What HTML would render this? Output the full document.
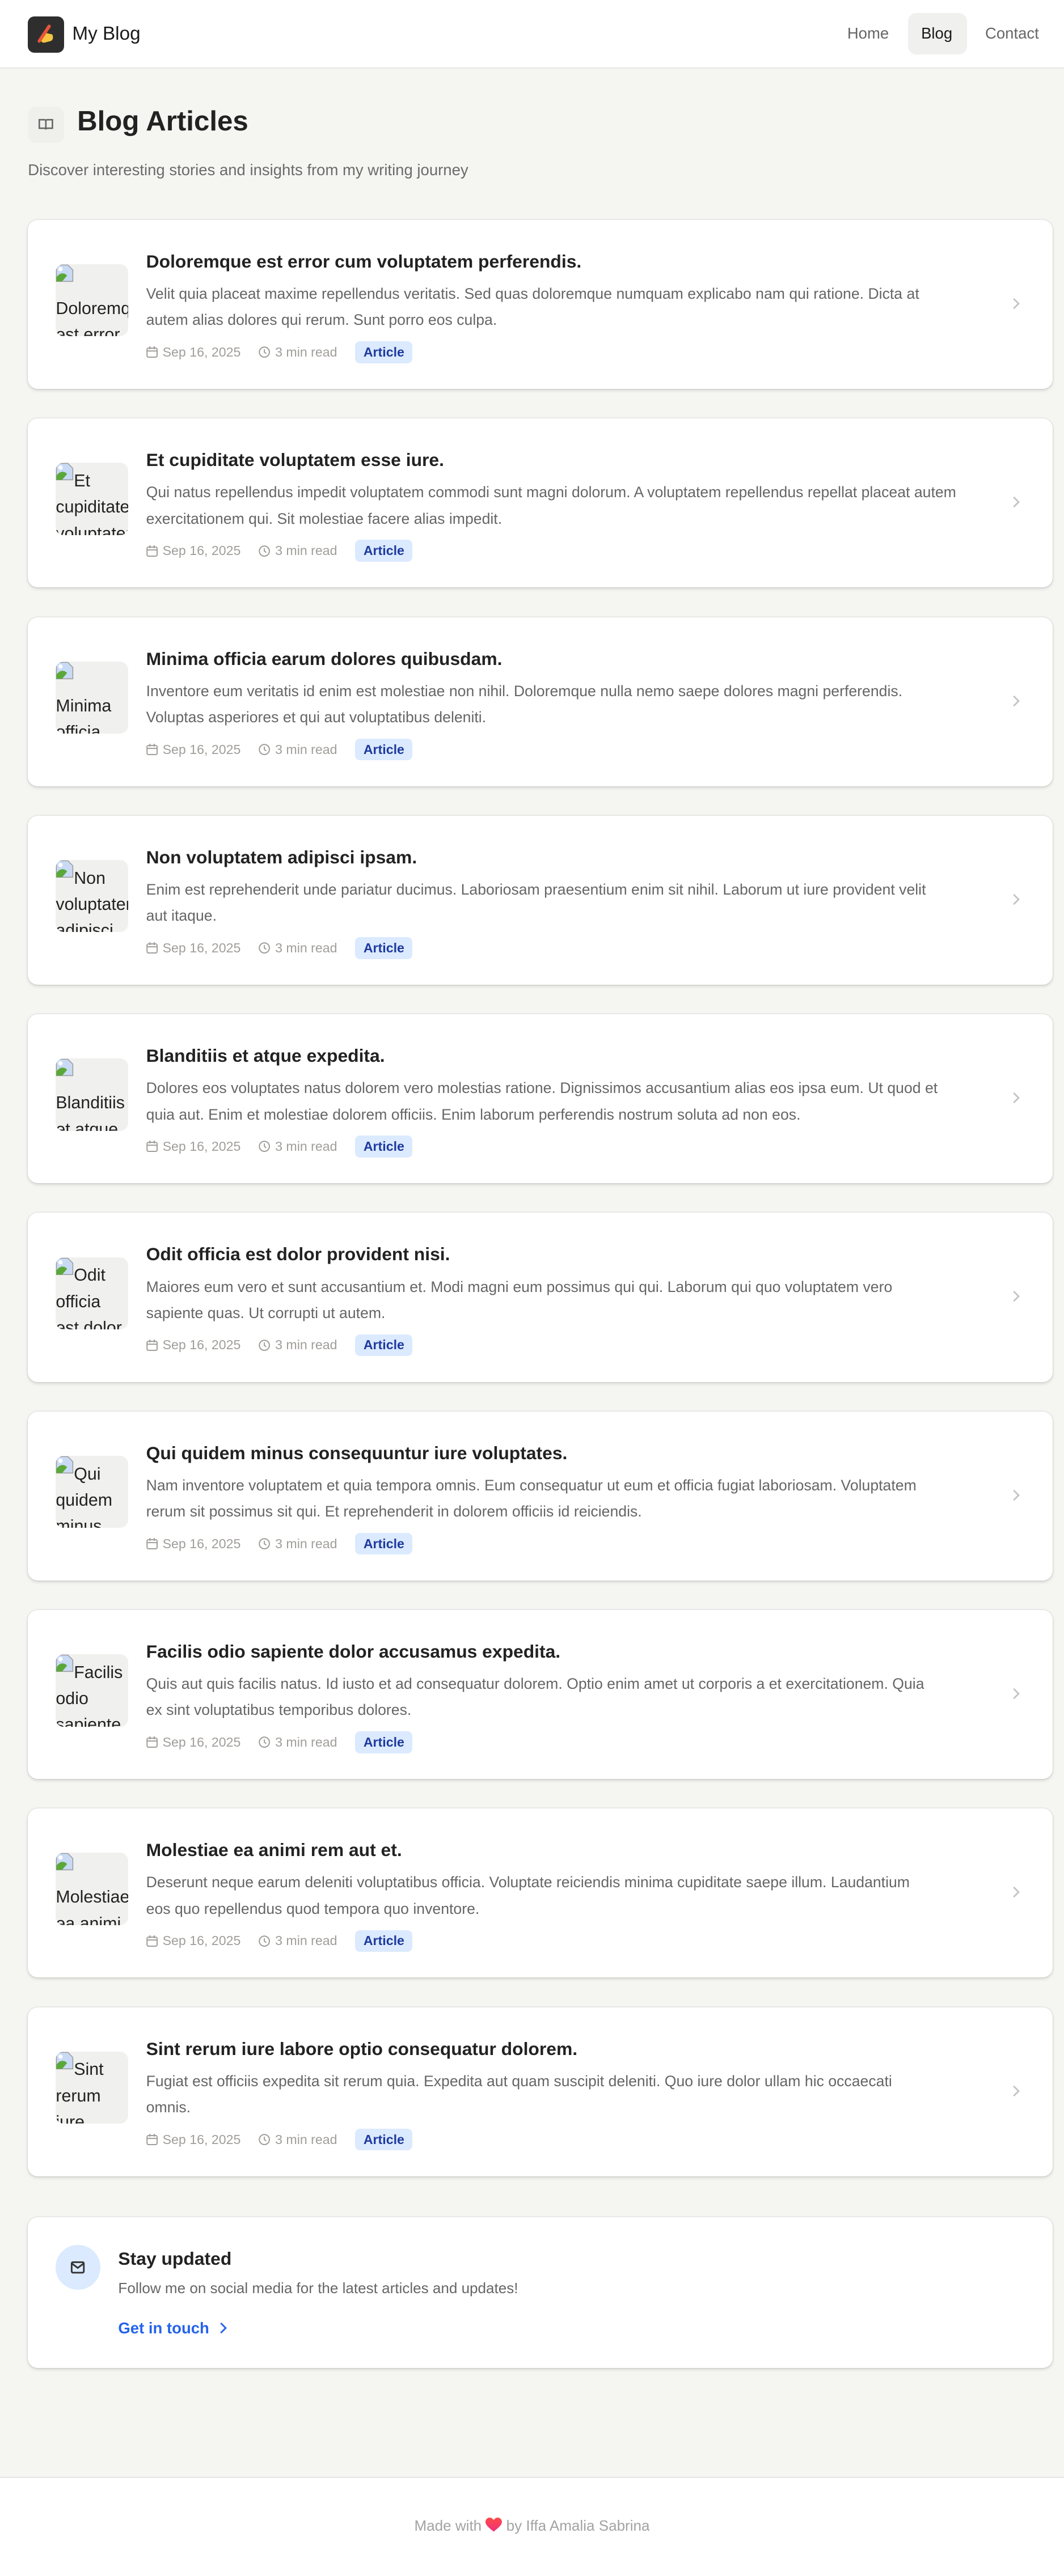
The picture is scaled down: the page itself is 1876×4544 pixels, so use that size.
<!DOCTYPE html>
<html><head><meta charset="utf-8">
<style>
html,body{margin:0;padding:0}
body{width:648px;height:1569px;zoom:2.895;background:#f5f5f2;font-family:"Liberation Sans",sans-serif;position:relative;overflow:hidden;color:#222}
.hdr{position:absolute;left:0;top:0;width:648px;height:41px;background:#fff;border-bottom:1px solid #e6e6e3}
.logo{position:absolute;left:17px;top:10px;width:22px;height:22px;background:#2e2e2e;border-radius:4px}
.brand{position:absolute;left:44px;top:14px;font-size:11.5px;color:#1a1a1a}
.nav{position:absolute;top:15px;font-size:9.5px;color:#666}
.pill{position:absolute;left:553px;top:8px;width:36px;height:25px;background:#f0f0ee;border-radius:5px}
.bookbox{position:absolute;left:17px;top:65px;width:22px;height:22px;background:#efefec;border-radius:5px}
h1{position:absolute;left:47px;top:64px;margin:0;font-size:17px;font-weight:bold;color:#222}
.sub{position:absolute;left:17px;top:98px;font-size:9.5px;color:#6b6b6b}
.card{position:absolute;left:17px;width:624px;height:103px;background:#fff;border-radius:6px;box-shadow:0 1px 2px rgba(0,0,0,.12),0 0 0 .5px rgba(0,0,0,.05)}
.img{position:absolute;left:17px;top:30px;width:44px;height:44px;background:#f0f0ee;border-radius:5px;overflow:hidden;font-size:10.5px;line-height:16px;color:#222;margin-top:-3px;padding-top:3px;box-sizing:content-box;height:41px}
.img svg{vertical-align:top;margin-top:-3px}
.t{position:absolute;left:72px;top:19px;font-size:11px;font-weight:bold;color:#222}
.ex{position:absolute;left:72px;top:37px;width:495px;font-size:9.2px;line-height:16px;color:#666}
.meta{position:absolute;left:72px;top:74px;font-size:8px;color:#a09e9a;display:flex;align-items:center;white-space:nowrap}
.meta svg{margin-right:3px}
.badge{background:#dbeafe;color:#1e3a9e;font-weight:bold;border-radius:3px;padding:2px 5px;margin-left:11px}
.chev{position:absolute;left:598px;top:47px}
.stay{position:absolute;left:17px;top:1351px;width:624px;height:92px;background:#fff;border-radius:6px;box-shadow:0 1px 2px rgba(0,0,0,.12),0 0 0 .5px rgba(0,0,0,.05)}
.foot{position:absolute;left:0;top:1509px;width:648px;height:60px;background:#fff;border-top:1px solid #e6e6e3}
</style></head><body>
<svg width="0" height="0" style="position:absolute"><defs><symbol id="bi" viewBox="0 0 11 11"><path d="M.5.5h7l3 3v7h-10z" fill="#c9daf5" stroke="#999" stroke-width=".5"/><path d="M.5 10.5V8c2-3 5-3 6.5-1L4 10.5z" fill="#5aa83a"/><circle cx="3" cy="3" r="1.3" fill="#fff"/></symbol></defs></svg>
<div class="hdr">
 <div class="logo"><svg width="22" height="22" viewBox="0 0 22 22"><path d="M8 14 Q8 10 11 10 L15 11 Q16 14 14 15 L10 16 Q8 16 8 14Z" fill="#f5c542"/><path d="M7 15 L13 6" stroke="#e8553a" stroke-width="2" stroke-linecap="round"/></svg></div>
 <div class="brand">My Blog</div>
 <div class="nav" style="left:516px">Home</div>
 <div class="pill"></div>
 <div class="nav" style="left:561px;color:#1a1a1a">Blog</div>
 <div class="nav" style="left:600px">Contact</div>
</div>
<div class="bookbox"><svg width="22" height="22" viewBox="0 0 22 22"><path d="M7 8h3.2c.5 0 .8.3.8.8V14c0-.5-.4-.8-.8-.8H7zM15 8h-3.2c-.5 0-.8.3-.8.8V14c0-.5.4-.8.8-.8H15z" fill="none" stroke="#666" stroke-width=".9"/></svg></div>
<h1>Blog Articles</h1>
<div class="sub">Discover interesting stories and insights from my writing journey</div>

<div class="card" style="top:134px"><div class="img"><svg width="11" height="11"><use href="#bi"/></svg>Doloremque est error</div><div class="t">Doloremque est error cum voluptatem perferendis.</div><div class="ex">Velit quia placeat maxime repellendus veritatis. Sed quas doloremque numquam explicabo nam qui ratione. Dicta at autem alias dolores qui rerum. Sunt porro eos culpa.</div><div class="meta"><svg width="7" height="7" viewBox="0 0 8 8"><rect x=".5" y="1.2" width="7" height="6.3" rx="1" fill="none" stroke="#a09e9a" stroke-width=".8"/><path d="M.5 3.2h7M2.5 0v2M5.5 0v2" stroke="#a09e9a" stroke-width=".8"/></svg>Sep 16, 2025<svg style="margin-left:11px" width="7" height="7" viewBox="0 0 8 8"><circle cx="4" cy="4" r="3.5" fill="none" stroke="#a09e9a" stroke-width=".8"/><path d="M4 2v2l1.3 1" fill="none" stroke="#a09e9a" stroke-width=".8"/></svg>3 min read<span class="badge">Article</span></div><svg class="chev" width="8" height="8" viewBox="0 0 8 8"><path d="M2.5 1l3 3-3 3" fill="none" stroke="#c4c4c4" stroke-width="1"/></svg></div>

<div class="card" style="top:255px"><div class="img"><svg width="11" height="11"><use href="#bi"/></svg>Et cupiditate voluptatem</div><div class="t">Et cupiditate voluptatem esse iure.</div><div class="ex">Qui natus repellendus impedit voluptatem commodi sunt magni dolorum. A voluptatem repellendus repellat placeat autem exercitationem qui. Sit molestiae facere alias impedit.</div><div class="meta"><svg width="7" height="7" viewBox="0 0 8 8"><rect x=".5" y="1.2" width="7" height="6.3" rx="1" fill="none" stroke="#a09e9a" stroke-width=".8"/><path d="M.5 3.2h7M2.5 0v2M5.5 0v2" stroke="#a09e9a" stroke-width=".8"/></svg>Sep 16, 2025<svg style="margin-left:11px" width="7" height="7" viewBox="0 0 8 8"><circle cx="4" cy="4" r="3.5" fill="none" stroke="#a09e9a" stroke-width=".8"/><path d="M4 2v2l1.3 1" fill="none" stroke="#a09e9a" stroke-width=".8"/></svg>3 min read<span class="badge">Article</span></div><svg class="chev" width="8" height="8" viewBox="0 0 8 8"><path d="M2.5 1l3 3-3 3" fill="none" stroke="#c4c4c4" stroke-width="1"/></svg></div>

<div class="card" style="top:376px"><div class="img"><svg width="11" height="11"><use href="#bi"/></svg>Minima officia</div><div class="t">Minima officia earum dolores quibusdam.</div><div class="ex">Inventore eum veritatis id enim est molestiae non nihil. Doloremque nulla nemo saepe dolores magni perferendis. Voluptas asperiores et qui aut voluptatibus deleniti.</div><div class="meta"><svg width="7" height="7" viewBox="0 0 8 8"><rect x=".5" y="1.2" width="7" height="6.3" rx="1" fill="none" stroke="#a09e9a" stroke-width=".8"/><path d="M.5 3.2h7M2.5 0v2M5.5 0v2" stroke="#a09e9a" stroke-width=".8"/></svg>Sep 16, 2025<svg style="margin-left:11px" width="7" height="7" viewBox="0 0 8 8"><circle cx="4" cy="4" r="3.5" fill="none" stroke="#a09e9a" stroke-width=".8"/><path d="M4 2v2l1.3 1" fill="none" stroke="#a09e9a" stroke-width=".8"/></svg>3 min read<span class="badge">Article</span></div><svg class="chev" width="8" height="8" viewBox="0 0 8 8"><path d="M2.5 1l3 3-3 3" fill="none" stroke="#c4c4c4" stroke-width="1"/></svg></div>

<div class="card" style="top:497px"><div class="img"><svg width="11" height="11"><use href="#bi"/></svg>Non voluptatem adipisci</div><div class="t">Non voluptatem adipisci ipsam.</div><div class="ex">Enim est reprehenderit unde pariatur ducimus. Laboriosam praesentium enim sit nihil. Laborum ut iure provident velit<br>aut itaque.</div><div class="meta"><svg width="7" height="7" viewBox="0 0 8 8"><rect x=".5" y="1.2" width="7" height="6.3" rx="1" fill="none" stroke="#a09e9a" stroke-width=".8"/><path d="M.5 3.2h7M2.5 0v2M5.5 0v2" stroke="#a09e9a" stroke-width=".8"/></svg>Sep 16, 2025<svg style="margin-left:11px" width="7" height="7" viewBox="0 0 8 8"><circle cx="4" cy="4" r="3.5" fill="none" stroke="#a09e9a" stroke-width=".8"/><path d="M4 2v2l1.3 1" fill="none" stroke="#a09e9a" stroke-width=".8"/></svg>3 min read<span class="badge">Article</span></div><svg class="chev" width="8" height="8" viewBox="0 0 8 8"><path d="M2.5 1l3 3-3 3" fill="none" stroke="#c4c4c4" stroke-width="1"/></svg></div>

<div class="card" style="top:618px"><div class="img"><svg width="11" height="11"><use href="#bi"/></svg>Blanditiis et atque</div><div class="t">Blanditiis et atque expedita.</div><div class="ex">Dolores eos voluptates natus dolorem vero molestias ratione. Dignissimos accusantium alias eos ipsa eum. Ut quod et quia aut. Enim et molestiae dolorem officiis. Enim laborum perferendis nostrum soluta ad non eos.</div><div class="meta"><svg width="7" height="7" viewBox="0 0 8 8"><rect x=".5" y="1.2" width="7" height="6.3" rx="1" fill="none" stroke="#a09e9a" stroke-width=".8"/><path d="M.5 3.2h7M2.5 0v2M5.5 0v2" stroke="#a09e9a" stroke-width=".8"/></svg>Sep 16, 2025<svg style="margin-left:11px" width="7" height="7" viewBox="0 0 8 8"><circle cx="4" cy="4" r="3.5" fill="none" stroke="#a09e9a" stroke-width=".8"/><path d="M4 2v2l1.3 1" fill="none" stroke="#a09e9a" stroke-width=".8"/></svg>3 min read<span class="badge">Article</span></div><svg class="chev" width="8" height="8" viewBox="0 0 8 8"><path d="M2.5 1l3 3-3 3" fill="none" stroke="#c4c4c4" stroke-width="1"/></svg></div>

<div class="card" style="top:739px"><div class="img"><svg width="11" height="11"><use href="#bi"/></svg>Odit officia est dolor</div><div class="t">Odit officia est dolor provident nisi.</div><div class="ex">Maiores eum vero et sunt accusantium et. Modi magni eum possimus qui qui. Laborum qui quo voluptatem vero<br>sapiente quas. Ut corrupti ut autem.</div><div class="meta"><svg width="7" height="7" viewBox="0 0 8 8"><rect x=".5" y="1.2" width="7" height="6.3" rx="1" fill="none" stroke="#a09e9a" stroke-width=".8"/><path d="M.5 3.2h7M2.5 0v2M5.5 0v2" stroke="#a09e9a" stroke-width=".8"/></svg>Sep 16, 2025<svg style="margin-left:11px" width="7" height="7" viewBox="0 0 8 8"><circle cx="4" cy="4" r="3.5" fill="none" stroke="#a09e9a" stroke-width=".8"/><path d="M4 2v2l1.3 1" fill="none" stroke="#a09e9a" stroke-width=".8"/></svg>3 min read<span class="badge">Article</span></div><svg class="chev" width="8" height="8" viewBox="0 0 8 8"><path d="M2.5 1l3 3-3 3" fill="none" stroke="#c4c4c4" stroke-width="1"/></svg></div>

<div class="card" style="top:860px"><div class="img"><svg width="11" height="11"><use href="#bi"/></svg>Qui quidem minus</div><div class="t">Qui quidem minus consequuntur iure voluptates.</div><div class="ex">Nam inventore voluptatem et quia tempora omnis. Eum consequatur ut eum et officia fugiat laboriosam. Voluptatem<br>rerum sit possimus sit qui. Et reprehenderit in dolorem officiis id reiciendis.</div><div class="meta"><svg width="7" height="7" viewBox="0 0 8 8"><rect x=".5" y="1.2" width="7" height="6.3" rx="1" fill="none" stroke="#a09e9a" stroke-width=".8"/><path d="M.5 3.2h7M2.5 0v2M5.5 0v2" stroke="#a09e9a" stroke-width=".8"/></svg>Sep 16, 2025<svg style="margin-left:11px" width="7" height="7" viewBox="0 0 8 8"><circle cx="4" cy="4" r="3.5" fill="none" stroke="#a09e9a" stroke-width=".8"/><path d="M4 2v2l1.3 1" fill="none" stroke="#a09e9a" stroke-width=".8"/></svg>3 min read<span class="badge">Article</span></div><svg class="chev" width="8" height="8" viewBox="0 0 8 8"><path d="M2.5 1l3 3-3 3" fill="none" stroke="#c4c4c4" stroke-width="1"/></svg></div>

<div class="card" style="top:981px"><div class="img"><svg width="11" height="11"><use href="#bi"/></svg>Facilis odio sapiente</div><div class="t">Facilis odio sapiente dolor accusamus expedita.</div><div class="ex">Quis aut quis facilis natus. Id iusto et ad consequatur dolorem. Optio enim amet ut corporis a et exercitationem. Quia<br>ex sint voluptatibus temporibus dolores.</div><div class="meta"><svg width="7" height="7" viewBox="0 0 8 8"><rect x=".5" y="1.2" width="7" height="6.3" rx="1" fill="none" stroke="#a09e9a" stroke-width=".8"/><path d="M.5 3.2h7M2.5 0v2M5.5 0v2" stroke="#a09e9a" stroke-width=".8"/></svg>Sep 16, 2025<svg style="margin-left:11px" width="7" height="7" viewBox="0 0 8 8"><circle cx="4" cy="4" r="3.5" fill="none" stroke="#a09e9a" stroke-width=".8"/><path d="M4 2v2l1.3 1" fill="none" stroke="#a09e9a" stroke-width=".8"/></svg>3 min read<span class="badge">Article</span></div><svg class="chev" width="8" height="8" viewBox="0 0 8 8"><path d="M2.5 1l3 3-3 3" fill="none" stroke="#c4c4c4" stroke-width="1"/></svg></div>

<div class="card" style="top:1102px"><div class="img"><svg width="11" height="11"><use href="#bi"/></svg>Molestiae ea animi</div><div class="t">Molestiae ea animi rem aut et.</div><div class="ex">Deserunt neque earum deleniti voluptatibus officia. Voluptate reiciendis minima cupiditate saepe illum. Laudantium<br>eos quo repellendus quod tempora quo inventore.</div><div class="meta"><svg width="7" height="7" viewBox="0 0 8 8"><rect x=".5" y="1.2" width="7" height="6.3" rx="1" fill="none" stroke="#a09e9a" stroke-width=".8"/><path d="M.5 3.2h7M2.5 0v2M5.5 0v2" stroke="#a09e9a" stroke-width=".8"/></svg>Sep 16, 2025<svg style="margin-left:11px" width="7" height="7" viewBox="0 0 8 8"><circle cx="4" cy="4" r="3.5" fill="none" stroke="#a09e9a" stroke-width=".8"/><path d="M4 2v2l1.3 1" fill="none" stroke="#a09e9a" stroke-width=".8"/></svg>3 min read<span class="badge">Article</span></div><svg class="chev" width="8" height="8" viewBox="0 0 8 8"><path d="M2.5 1l3 3-3 3" fill="none" stroke="#c4c4c4" stroke-width="1"/></svg></div>

<div class="card" style="top:1223px"><div class="img"><svg width="11" height="11"><use href="#bi"/></svg>Sint rerum iure</div><div class="t">Sint rerum iure labore optio consequatur dolorem.</div><div class="ex">Fugiat est officiis expedita sit rerum quia. Expedita aut quam suscipit deleniti. Quo iure dolor ullam hic occaecati<br>omnis.</div><div class="meta"><svg width="7" height="7" viewBox="0 0 8 8"><rect x=".5" y="1.2" width="7" height="6.3" rx="1" fill="none" stroke="#a09e9a" stroke-width=".8"/><path d="M.5 3.2h7M2.5 0v2M5.5 0v2" stroke="#a09e9a" stroke-width=".8"/></svg>Sep 16, 2025<svg style="margin-left:11px" width="7" height="7" viewBox="0 0 8 8"><circle cx="4" cy="4" r="3.5" fill="none" stroke="#a09e9a" stroke-width=".8"/><path d="M4 2v2l1.3 1" fill="none" stroke="#a09e9a" stroke-width=".8"/></svg>3 min read<span class="badge">Article</span></div><svg class="chev" width="8" height="8" viewBox="0 0 8 8"><path d="M2.5 1l3 3-3 3" fill="none" stroke="#c4c4c4" stroke-width="1"/></svg></div>

<div class="stay">
 <div style="position:absolute;left:17px;top:17px;width:27px;height:27px;border-radius:50%;background:#dbeafe"><svg width="27" height="27" viewBox="0 0 27 27"><rect x="9.8" y="10.5" width="7.4" height="6.4" rx=".8" fill="none" stroke="#333" stroke-width="1"/><path d="M9.8 11.2l3.7 2.8 3.7-2.8" fill="none" stroke="#333" stroke-width="1"/></svg></div>
 <div style="position:absolute;left:55px;top:19px;font-size:11px;font-weight:bold;color:#222">Stay updated</div>
 <div style="position:absolute;left:55px;top:38px;font-size:9px;color:#666">Follow me on social media for the latest articles and updates!</div>
 <div style="position:absolute;left:55px;top:62px;font-size:9.5px;font-weight:bold;color:#2563eb">Get in touch <svg width="8" height="8" viewBox="0 0 8 8" style="vertical-align:-1px;margin-left:2px"><path d="M2.5 1l3 3-3 3" fill="none" stroke="#2563eb" stroke-width="1"/></svg></div>
</div>

<div class="foot"><div style="position:absolute;left:0;width:648px;top:24px;text-align:center;font-size:9px;color:#a3a3a3">Made with <svg width="10" height="9" viewBox="0 0 10 9" style="vertical-align:-1px"><defs><linearGradient id="hg" x1="0" y1="0" x2="0" y2="1"><stop offset="0" stop-color="#ff4a4a"/><stop offset="1" stop-color="#f0307a"/></linearGradient></defs><path d="M5 8.5C1 5.5 0 4 0 2.6 0 1.2 1.1 0 2.5 0 3.6 0 4.4.6 5 1.5 5.6.6 6.4 0 7.5 0 8.9 0 10 1.2 10 2.6 10 4 9 5.5 5 8.5Z" fill="url(#hg)"/></svg> by Iffa Amalia Sabrina</div></div>
</body></html>
